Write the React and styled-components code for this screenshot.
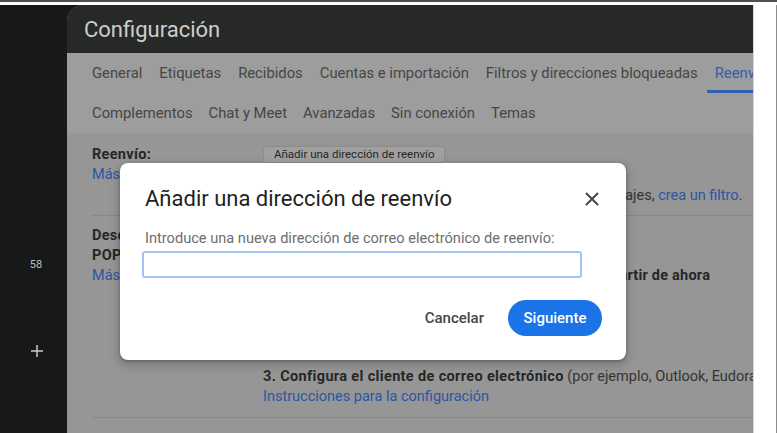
import React from "react";
import styled, { createGlobalStyle } from "styled-components";

const GlobalStyle = createGlobalStyle`
  html, body { margin: 0; padding: 0; }
  body { font-family: Roboto, "Noto Sans", Arial, sans-serif; overflow: hidden; }
  * { box-sizing: border-box; }
`;

const Page = styled.div`
  position: relative;
  width: 777px;
  height: 433px;
  overflow: hidden;
  background: #ffffff;
  border-top: 2px solid #4f4f4f;
  padding-top: 3px;
  display: flex;
  flex-direction: column;
`;

const Body = styled.div`
  flex: 1;
  display: flex;
  min-height: 0;
`;

const Shell = styled.div`
  width: 753px;
  display: flex;
  background: #171918;
  overflow: hidden;
`;

const Strip = styled.div`
  flex: 1;
  background: #ffffff;
  border-left: 1px solid #d6d6d6;
  border-right: 1px solid #8c8c8c;
`;

const Sidebar = styled.nav`
  width: 67px;
  flex: none;
  display: flex;
  flex-direction: column;
  align-items: center;
  padding-top: 253px;
`;

const Count = styled.div`
  font-size: 11px;
  line-height: 14px;
  color: #bfc0bf;
  padding-left: 5px;
`;

const PlusIcon = styled.svg`
  margin-top: 72px;
  margin-left: 6px;
  width: 14px;
  height: 14px;
`;

const Main = styled.main`
  flex: 1;
  min-width: 0;
  display: flex;
  flex-direction: column;
  background: #959695;
  border-top-left-radius: 16px;
  overflow: hidden;
`;

const Header = styled.header`
  height: 48px;
  flex: none;
  background: #272928;
  padding: 2px 0 0 17px;
  display: flex;
  align-items: center;
`;

const Title = styled.h1`
  margin: 0;
  font-size: 22px;
  font-weight: 400;
  line-height: 46px;
  color: #cdcecd;
`;

const Tabs = styled.div`
  background: #9c9d9c;
  padding-left: 17px;
  flex: none;
`;

const TabRow = styled.div`
  display: flex;
  gap: ${(p) => p.$gap || 0}px;
  height: 40px;
  white-space: nowrap;
`;

const Tab = styled.div`
  padding: 0 8px;
  height: 40px;
  line-height: 41px;
  font-size: 14.8px;
  color: ${(p) => (p.$active ? "#2f5eb2" : "#454645")};
  box-shadow: ${(p) => (p.$active ? "inset 0 -3px 0 #2f5eb2" : "none")};
  flex: none;
`;

const Content = styled.div`
  padding-left: 25px;
  display: flex;
  flex-direction: column;
  font-size: 14.5px;
  line-height: 20px;
  color: #333433;
  white-space: nowrap;
`;

const Section = styled.section`
  display: grid;
  grid-template-columns: 171px 1fr;
  padding: ${(p) => p.$pad || "10px 0"};
  border-bottom: ${(p) => (p.$last ? "none" : "1px solid #878887")};
`;

const Label = styled.div`
  font-weight: 700;
  letter-spacing: 0.3px;
  color: #262726;
`;

const Link = styled.span`
  color: #2c55a3;
`;

const Col = styled.div`
  display: flex;
  flex-direction: column;
  min-width: 0;
`;

const SmallButton = styled.div`
  align-self: flex-start;
  height: 17px;
  margin-top: 1px;
  margin-bottom: 23px;
  padding: 0 10px;
  font-size: 11.5px;
  line-height: 15px;
  color: #252625;
  background: #9fa09f;
  border: 1px solid #8a8b8a;
  border-radius: 3px;
`;

const Line = styled.div`
  margin-top: ${(p) => p.$mt || "0"};
  font-weight: ${(p) => (p.$bold ? 700 : 400)};
  letter-spacing: ${(p) => (p.$bold ? "0.22px" : "0")};
  color: ${(p) => (p.$bold ? "#262726" : "#333433")};
`;

const B = styled.b`
  font-weight: 700;
  letter-spacing: 0.35px;
  color: #262726;
`;

const Green = styled.span`
  color: #1e6b34;
`;

const Dialog = styled.div`
  position: absolute;
  left: 120px;
  top: 161px;
  width: 506px;
  height: 197px;
  background: #ffffff;
  border-radius: 8px;
  box-shadow: 0 4px 8px 3px rgba(0, 0, 0, 0.15), 0 1px 3px rgba(0, 0, 0, 0.3);
  padding: 22px 24px 24px 25px;
  display: flex;
  flex-direction: column;
`;

const DialogHead = styled.div`
  display: flex;
  align-items: center;
  justify-content: space-between;
  height: 28px;
`;

const DialogTitle = styled.h2`
  margin: 0;
  font-size: 22px;
  font-weight: 400;
  line-height: 28px;
  color: #1f1f1f;
`;

const Close = styled.button`
  width: 20px;
  height: 20px;
  padding: 0;
  border: none;
  background: none;
  display: flex;
  align-items: center;
  justify-content: center;
`;

const FieldLabel = styled.label`
  margin-top: 15px;
  font-size: 14.6px;
  line-height: 20px;
  color: #6d6e6d;
`;

const Input = styled.input`
  margin-top: 3px;
  margin-left: -3px;
  width: 440px;
  height: 27px;
  border: 2px solid #a4c4f8;
  border-radius: 3px;
  outline: none;
  font-size: 14px;
`;

const Footer = styled.div`
  margin-top: 22px;
  display: flex;
  justify-content: flex-end;
`;

const TextButton = styled.button`
  height: 36px;
  padding: 0 24px 0 12px;
  border: none;
  background: none;
  font-family: inherit;
  font-size: 15px;
  font-weight: 500;
  color: #444746;
`;

const PrimaryButton = styled.button`
  height: 36px;
  width: 94px;
  border: none;
  border-radius: 18px;
  background: #1b73e8;
  color: #ffffff;
  font-family: inherit;
  font-size: 15px;
  font-weight: 500;
`;

export default function App() {
  return (
    <>
      <GlobalStyle />
      <Page>
        <Body>
          <Shell>
            <Sidebar>
              <Count>58</Count>
              <PlusIcon viewBox="0 0 14 14">
                <path d="M7 1v12M1 7h12" stroke="#c9cac9" strokeWidth="1.5" fill="none" />
              </PlusIcon>
            </Sidebar>
            <Main>
              <Header>
                <Title>Configuración</Title>
              </Header>
              <Tabs>
                <TabRow $gap={1}>
                  <Tab>General</Tab>
                  <Tab>Etiquetas</Tab>
                  <Tab>Recibidos</Tab>
                  <Tab>Cuentas e importación</Tab>
                  <Tab>Filtros y direcciones bloqueadas</Tab>
                  <Tab $active>Reenvío y correo POP/IMAP</Tab>
                </TabRow>
                <TabRow>
                  <Tab>Complementos</Tab>
                  <Tab>Chat y Meet</Tab>
                  <Tab>Avanzadas</Tab>
                  <Tab>Sin conexión</Tab>
                  <Tab>Temas</Tab>
                </TabRow>
              </Tabs>
              <Content>
                <Section $pad="12px 0 9px">
                  <Col>
                    <Label>Reenvío:</Label>
                    <Link>Más información</Link>
                  </Col>
                  <Col>
                    <SmallButton>Añadir una dirección de reenvío</SmallButton>
                    <Line>
                      Consejo: aquí puedes reenviar solo algunos de tus mensajes,{" "}
                      <Link>crea un filtro</Link>.
                    </Line>
                  </Col>
                </Section>
                <Section $pad="10px 0">
                  <Col>
                    <Label>Descarga de correo:</Label>
                    <Label>POP</Label>
                    <Link>Más información</Link>
                  </Col>
                  <Col>
                    <Line $bold>1. Estado: POP habilitado</Line>
                    <Line>Habilitar POP</Line>
                    <Line $bold>Estado: POP habilitado para los correos recibidos a partir de ahora</Line>
                    <Line $bold>2. Al acceder con POP</Line>
                    <Line>conservar la copia</Line>
                    <Line $mt="41px">
                      <B>3. Configura el cliente de correo electrónico</B> (por ejemplo, Outlook, Eudora, Netscape Mail)
                    </Line>
                    <Link>Instrucciones para la configuración</Link>
                  </Col>
                </Section>
                <Section $pad="12px 0 9px" $last>
                  <Col>
                    <Label>Acceso IMAP:</Label>
                  </Col>
                  <Col>
                    <Line>
                      <B>Estado: </B>
                      <Green>IMAP está habilitado</Green>
                    </Line>
                  </Col>
                </Section>
              </Content>
            </Main>
          </Shell>
          <Strip />
        </Body>
        <Dialog role="dialog">
          <DialogHead>
            <DialogTitle>Añadir una dirección de reenvío</DialogTitle>
            <Close aria-label="Cerrar">
              <svg width="14" height="14" viewBox="0 0 14 14">
                <path d="M1 1l12 12M13 1L1 13" stroke="#444746" strokeWidth="2" fill="none" />
              </svg>
            </Close>
          </DialogHead>
          <FieldLabel>Introduce una nueva dirección de correo electrónico de reenvío:</FieldLabel>
          <Input />
          <Footer>
            <TextButton>Cancelar</TextButton>
            <PrimaryButton>Siguiente</PrimaryButton>
          </Footer>
        </Dialog>
      </Page>
    </>
  );
}
